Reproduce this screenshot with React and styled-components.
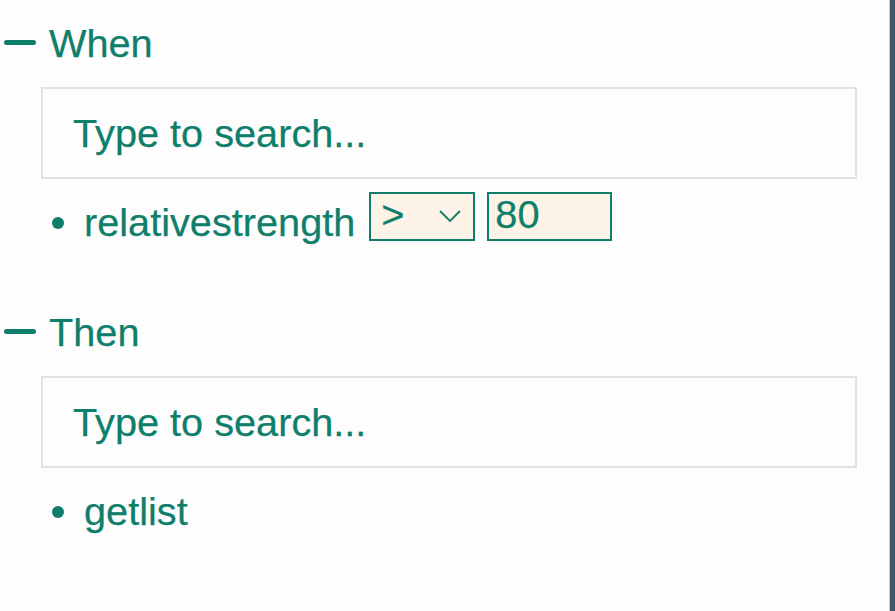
import React from 'react';
import styled, { createGlobalStyle } from 'styled-components';

const teal = '#0f7f6b';

const GlobalStyle = createGlobalStyle`
  html, body {
    margin: 0;
    padding: 0;
    height: 100%;
    background: #fdfdfd;
  }
  #root {
    height: 100%;
  }
`;

const Page = styled.div`
  display: flex;
  height: 611px;
  font-family: "Liberation Sans", Arial, sans-serif;
  font-size: 39.7px;
  color: ${teal};
  -webkit-text-stroke: 0.25px ${teal};
`;

const Panel = styled.div`
  flex: 1;
  padding: 21px 32px 0 4px;
  background: #fdfdfd;
  border-right: 1px solid #c4c6c8;
`;

const Strip = styled.div`
  width: 5px;
  background: #3d5869;
`;

const Section = styled.section`
  margin-bottom: ${p => p.$gap || 0}px;
`;

const Header = styled.div`
  display: flex;
  align-items: center;
  line-height: 45px;
`;

const Dash = styled.span`
  width: 32px;
  height: 5px;
  margin-bottom: 3px;
  border-radius: 3px;
  background: ${teal};
`;

const Title = styled.span`
  margin-left: 13px;
`;

const SearchBox = styled.div`
  margin: 21px 0 0 37px;
  padding: 22px 30px 21px;
  border: 2px solid #dfe1e4;
  line-height: 45px;
`;

const List = styled.ul`
  margin: 0;
  padding: 0;
  list-style: none;
`;

const Item = styled.li`
  display: flex;
  align-items: flex-start;
  margin-top: 13px;
`;

const Bullet = styled.span`
  flex: none;
  width: 12px;
  height: 12px;
  margin: 25px 20px 0 48px;
  border-radius: 50%;
  background: ${teal};
`;

const Label = styled.span`
  margin-top: 8px;
  margin-right: 14px;
  line-height: 45px;
`;

const Select = styled.div`
  box-sizing: border-box;
  display: flex;
  align-items: center;
  justify-content: space-between;
  width: 106px;
  height: 49px;
  padding: 0 12px 4px 10px;
  border: 2px solid ${teal};
  background: #fdf3e6;
  line-height: 1;
`;

const Chevron = styled.svg`
  width: 22px;
  height: 12px;
  margin-top: 2px;
`;

const NumberInput = styled.input`
  box-sizing: border-box;
  width: 125px;
  height: 49px;
  margin: 0 0 0 12px;
  padding: 0 6px 4px;
  border: 2px solid ${teal};
  background: #fdf3e6;
  color: ${teal};
  font: inherit;
  outline: none;
`;

function Block({ title, children, gap }) {
  return (
    <Section $gap={gap}>
      <Header>
        <Dash />
        <Title>{title}</Title>
      </Header>
      <SearchBox>Type to search...</SearchBox>
      <List>{children}</List>
    </Section>
  );
}

export default function App() {
  return (
    <>
      <GlobalStyle />
      <Page>
        <Panel>
          <Block title="When" gap={65}>
            <Item>
              <Bullet />
              <Label>relativestrength</Label>
              <Select>
                <span>&gt;</span>
                <Chevron viewBox="0 0 22 12" fill="none">
                  <path d="M1 1 L11 11 L21 1" stroke={teal} strokeWidth="1.8" />
                </Chevron>
              </Select>
              <NumberInput defaultValue="80" />
            </Item>
          </Block>
          <Block title="Then">
            <Item>
              <Bullet />
              <Label>getlist</Label>
            </Item>
          </Block>
        </Panel>
        <Strip />
      </Page>
    </>
  );
}
